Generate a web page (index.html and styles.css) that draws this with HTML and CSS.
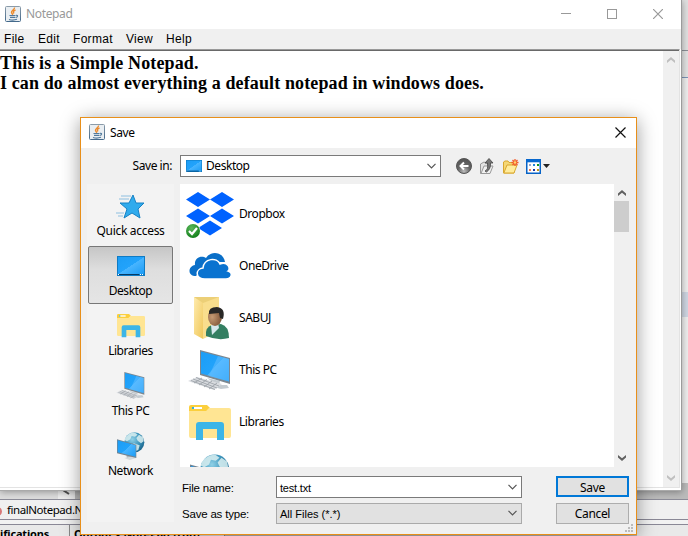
FILE: index.html
```html
<!DOCTYPE html>
<html lang="en">
<head>
<meta charset="utf-8">
<title>Notepad</title>
<link rel="stylesheet" href="styles.css">
</head>
<body>
<svg width="0" height="0" class="defs">
  <defs>
    <linearGradient id="blue" x1="0" y1="0" x2="1" y2="1"><stop offset="0" stop-color="#1c9df5"/><stop offset=".5" stop-color="#22a3fb"/><stop offset=".51" stop-color="#48b5ff"/><stop offset="1" stop-color="#1c9cf5"/></linearGradient>
    <linearGradient id="fold" x1="0" y1="0" x2="1" y2="1"><stop offset="0" stop-color="#ffebad"/><stop offset="1" stop-color="#efc75a"/></linearGradient>
    <linearGradient id="frame" x1="0" y1="0" x2="0" y2="1"><stop offset="0" stop-color="#8a9ba9"/><stop offset="1" stop-color="#44698b"/></linearGradient>
    <radialGradient id="globeFill" cx=".4" cy=".35" r=".65"><stop offset="0" stop-color="#8fd0e6"/><stop offset=".6" stop-color="#3e96bd"/><stop offset="1" stop-color="#1d688f"/></radialGradient>
    <radialGradient id="ball" cx=".5" cy=".85" r=".8"><stop offset="0" stop-color="#bcbcbc"/><stop offset=".5" stop-color="#666"/><stop offset="1" stop-color="#555"/></radialGradient>
    <radialGradient id="green" cx=".4" cy=".3" r=".7"><stop offset="0" stop-color="#5bb85c"/><stop offset="1" stop-color="#14801b"/></radialGradient>
    <radialGradient id="face" cx=".3" cy=".5" r=".8"><stop offset="0" stop-color="#c79b74"/><stop offset="1" stop-color="#73492f"/></radialGradient>
    <symbol id="java" viewBox="0 0 16 16">
      <rect x=".5" y=".5" width="15" height="15" rx="1" fill="#e9eef2" stroke="url(#frame)"/>
      <path d="M9.500 1.500C10 3.500 6 4.500 6.500 6.500C6.700 7.500 8 8 7.500 9M10.500 4C8 5 8 6 9 7.500" fill="none" stroke="#ec8a2c" stroke-width="1.400"/>
      <path d="M4.500 9.500H10.500M5 11.300H10M4 13.500Q8 14.700 12 13.300M11 9.300Q13.500 9 12 11L10.500 11.500" fill="none" stroke="#50799c" stroke-width="1.200"/>
    </symbol>
    <symbol id="desk" viewBox="0 0 28 20"><rect width="28" height="20" fill="#0f7bc4"/><rect x="1" y="1" width="26" height="17" fill="url(#blue)"/><path d="M1 18.500H22" stroke="#063b66"/><path d="M1 18.500h1M23 18.500h1M25 18.500h1" stroke="#fff"/></symbol>
    <symbol id="lib" viewBox="0 0 42 36"><path d="M0 2Q0 0 2 0H18L21 3L18 6H0Z" fill="#fbcf3d"/><path d="M0 6H17L20 3H40Q42 3 42 5V31Q42 33 40 33H2Q0 33 0 31Z" fill="#ffe593"/><rect x="3" y="2" width="10" height="2" fill="#fff"/><rect x="3" y="2" width="2" height="2" fill="#35b0dc"/><path d="M7 35V20Q7 17 10 17H32Q35 17 35 20V35H28V24H14V35Z" fill="#3cb5e7"/></symbol>
    <symbol id="pc" viewBox="0 0 44 42">
      <path d="M19 28L32 31L31 35L39 35L41 38L33 39L19 35L26 33Z" fill="#c4cbd0"/>
      <path d="M12 0L42 8V34L12 25Z" fill="#7c8790"/><path d="M13 1.500L41 9V31.500L13 23.500Z" fill="url(#blue)"/><path d="M30 6L41 9V31.500L21 26Z" fill="#64bdff" opacity=".55"/>
      <path d="M9 27L34 34L26 40L0 31Z" fill="#d9dce0"/><path d="M5 29L29 38M8 27.500L31 36M3 30.500L27 39.500M14 28L6 33M19 29.500L11 35M24 31L16 37M29 33L21 39" stroke="#979da3" stroke-width=".8"/>
    </symbol>
    <symbol id="net" viewBox="0 0 42 42">
      <circle cx="26" cy="15.500" r="15" fill="url(#globeFill)"/><path d="M13 8Q19 0 27 1L31 4L27 7L22 6L20 11L15 14L11 12ZM33 4L39 8L40 14L36 17L31 13L29 9ZM25 17L34 20L32 27L27 29L23 22Z" fill="#d9eef0" opacity=".85"/>
      <path d="M14 34H25L24 39L15 40Z" fill="#a9b3ba"/><path d="M11 39L25 36L29 39L19 42Z" fill="#d3d9dc"/><path d="M0 11L29 19V39L0 32Z" fill="#74838f"/><path d="M1 12.500L28 20V37L1 30.500Z" fill="url(#blue)"/>
    </symbol>
    <symbol id="chev" viewBox="0 0 9 6"><path d="M.5 .8L4.500 4.800L8.500 .8" fill="none" stroke="currentColor" stroke-width="1.200"/></symbol>
    <symbol id="arrow" viewBox="0 0 8 6"><path d="M0 6V3.500L4 0L8 3.500V6L4 2.800Z" fill="currentColor"/></symbol>
  </defs>
</svg>

<div class="ide">
  <div class="ide-side"><i class="a"></i><i class="b"></i><i class="c"></i><i class="d"></i></div>
  <div class="ide-scroll"><svg width="8" height="5" viewBox="0 0 8 5"><path d="M0 0L6 4" stroke="#555" stroke-width="2"/></svg></div>
  <div class="ide-tabs"><span class="dot"></span><span class="tab-name">finalNotepad.Notepad</span></div>
  <div class="ide-gap"></div>
  <div class="ide-panels"><div class="panel-left"><span>ifications</span></div><div class="panel-right"><span>Output - NotePad (run)</span></div><div class="panel-mid"></div></div>
</div>

<section class="window">
  <header class="titlebar">
    <svg width="16" height="16"><use href="#java"/></svg><span class="title">Notepad</span>
    <div class="controls">
      <svg width="10" height="11"><path d="M0 5.500H10" stroke="#999"/></svg>
      <svg width="10" height="10"><rect x=".5" y=".5" width="9" height="9" fill="none" stroke="#999"/></svg>
      <svg width="10" height="10"><path d="M0 0L10 10M10 0L0 10" stroke="#999" stroke-width="1.200"/></svg>
    </div>
  </header>
  <nav class="menu"><span class="m1">File</span><span class="m2">Edit</span><span class="m3">Format</span><span class="m4">View</span><span class="m5">Help</span></nav>
  <div class="editor">
    <div class="text"><div>This is a Simple Notepad.</div><div>I can do almost everything a default notepad in windows does.</div></div>
    <div class="scroll dim"><svg width="8" height="6"><use href="#arrow"/></svg><svg class="down" width="8" height="6"><use href="#arrow"/></svg></div>
  </div>
</section>

<section class="dialog">
  <header class="dialog-title"><svg width="16" height="16"><use href="#java"/></svg><span>Save</span>
    <svg class="close" width="11" height="11"><path d="M.5 .5L10.500 10.500M10.500 .5L.5 10.500" stroke="#111" stroke-width="1.200"/></svg>
  </header>
  <div class="location">
    <label>Save in:</label>
    <div class="combo place"><svg width="16" height="12" viewBox="0 0 28 20" preserveAspectRatio="none"><use href="#desk" width="28" height="20"/></svg><span>Desktop</span><svg class="chev" width="9" height="6"><use href="#chev"/></svg></div>
    <div class="tools">
      <svg width="16" height="16"><circle cx="8" cy="8" r="7.500" fill="url(#ball)" stroke="#555"/><path d="M12.500 8H5M8 4.500L4.500 8L8 11.500" fill="none" stroke="#fff" stroke-width="2"/></svg>
      <svg width="14" height="17" viewBox="0 0 14 17"><path d="M.5 6L4 4L6 5H8V15.500H.5Z" fill="#e4e4e4" stroke="#999"/><path d="M1 15.500L4 8H13L10 15.500Z" fill="#f1f1f1" stroke="#999"/><path d="M5 13Q8.500 12 7.500 5H5L9 .5L13 5H10.500Q11 11 6.500 14Z" fill="#777" stroke="#444" stroke-width=".8"/></svg>
      <svg class="newfolder" width="16" height="16" viewBox="0 0 16 16"><path d="M.5 4L2 3H5L6 4.500H11V15H.5Z" fill="#f5d775" stroke="#d9a72f"/><path d="M.8 15L4 7H14L11 15Z" fill="#ffec9c" stroke="#d9a72f"/><path d="M12 1V8M8.500 4.500H15.500M9.500 2L14.500 7M14.500 2L9.500 7" stroke="#f25b2a" stroke-width="1.300"/><circle cx="12" cy="4.500" r="1.300" fill="#ffd36b"/></svg>
      <svg width="24" height="15" viewBox="0 0 24 15"><rect x=".75" y=".75" width="13.500" height="13.500" fill="#fff" stroke="#0863c6" stroke-width="1.500"/><path d="M0 1.800H15" stroke="#0869d0" stroke-width="3"/><path d="M3 5h2v2h-2z" fill="#98a4ca"/><path d="M7 5h2v2h-2z" fill="#1e82dc"/><path d="M11 5h2v2h-2z" fill="#149319"/><path d="M3 10h2v2h-2z" fill="#f57a50"/><path d="M7 10h2v2h-2z" fill="#1633a5"/><path d="M11 10h2v2h-2z" fill="#c59516"/><path d="M17 5H24L20.500 9Z" fill="#222"/></svg>
    </div>
  </div>
  <div class="browser">
    <aside class="places">
      <div class="spot"><div class="ico"><svg width="30" height="25" viewBox="0 0 30 25"><path d="M17 1L20 9H28L22 15L24 24L16 19L8 24L11 15L4 9H13Z" fill="#30abed" stroke="#1681c4"/><path d="M5 2H15M3 5H13M0 19H8M2 22H7" stroke="#8dbfe0"/></svg></div><span class="q">Quick access</span></div>
      <div class="spot on"><div class="ico"><svg width="28" height="20"><use href="#desk"/></svg></div><span>Desktop</span></div>
      <div class="spot"><div class="ico"><svg width="28" height="24"><use href="#lib" width="28" height="24"/></svg></div><span>Libraries</span></div>
      <div class="spot"><div class="ico"><svg width="30" height="28"><use href="#pc"/></svg></div><span>This PC</span></div>
      <div class="spot"><div class="ico"><svg width="28" height="28"><use href="#net"/></svg></div><span>Network</span></div>
    </aside>
    <div class="files">
      <div class="file"><svg width="48" height="48" viewBox="0 0 48 48"><g fill="#0062ff"><path d="M0 9.500L12 2L24 9.500L12 17ZM24 9.500L36 2L48 9.500L36 17ZM0 26L12 18.500L24 26L12 33.500ZM24 26L36 18.500L48 26L36 33.500ZM12 38L24 30.500L36 38L24 45.500Z"/></g><circle cx="7" cy="41" r="7.500" fill="#fff"/><circle cx="7" cy="41" r="7" fill="url(#green)"/><path d="M3 41L6 44L11 38" fill="none" stroke="#fff" stroke-width="2.200"/></svg><span>Dropbox</span></div>
      <div class="file"><svg width="48" height="48" viewBox="0 0 48 48"><path d="M10 34C1 34 2 24 9 23C8 15 16 13 20 16C26 7 38 11 39 20H32L20 23Z" fill="#0a6fc8"/><path d="M19 37C9 37 9 27 17 26C18 16 31 15 34 22C42 19 45 27 42 29C48 31 45 37 40 37Z" fill="#0a73d0" stroke="#fff" stroke-width="1.500"/></svg><span>OneDrive</span></div>
      <div class="file"><svg width="48" height="48" viewBox="0 0 48 48"><path d="M8 3H33V42H16Z" fill="#eccf77"/><path d="M8 3L17 9V45L8 40Z" fill="url(#fold)"/><path d="M17 9L33 3V37L17 45Z" fill="#f9de8d"/><path d="M20 42Q19 33 26 31L35 30Q43 32 43 44Q32 47 20 42Z" fill="#347f62"/><path d="M25 31L32 29L33 34L26 41Z" fill="#d6e8ed"/><ellipse cx="29" cy="23" rx="7" ry="9" fill="url(#face)"/><path d="M23 20Q22 13 31 13Q40 14 37 25L34 24L33 19Z" fill="#292827"/></svg><span>SABUJ</span></div>
      <div class="file"><svg width="48" height="48" viewBox="0 0 48 48"><use href="#pc" x="2" y="4" width="44" height="42"/></svg><span>This PC</span></div>
      <div class="file"><svg width="48" height="48" viewBox="0 0 48 48"><use href="#lib" x="3" y="7" width="42" height="36"/></svg><span>Libraries</span></div>
      <div class="file"><svg width="48" height="48" viewBox="0 0 48 48"><use href="#net" x="4" y="4" width="40" height="40"/></svg></div>
    </div>
    <div class="scroll"><svg width="8" height="6"><use href="#arrow"/></svg><div class="thumb"></div><svg class="down" width="8" height="6"><use href="#arrow"/></svg></div>
  </div>
  <footer class="form">
    <label class="fl">File name:</label><div class="combo"><span class="v1">test.txt</span><svg class="chev" width="9" height="6"><use href="#chev"/></svg></div><div class="btn primary">Save</div>
    <label class="fl">Save as type:</label><div class="combo type"><span class="v2">All Files (*.*)</span><svg class="chev" width="9" height="6"><use href="#chev"/></svg></div><div class="btn">Cancel</div>
  </footer>
  <svg class="grip" width="8" height="8"><path d="M6 0h2v2h-2zM3 3h2v2h-2zM6 3h2v2h-2zM0 6h2v2h-2zM3 6h2v2h-2zM6 6h2v2h-2z" fill="#bbb"/></svg>
</section>
</body>
</html>
```
FILE: styles.css
```css
* { box-sizing: border-box; }
body { margin: 0; width: 688px; height: 536px; overflow: hidden; position: relative; font: 12px/16px "Noto Sans", sans-serif; color: #000; }
svg { display: block; flex: none; }
.defs { position: absolute; }
span, label { white-space: nowrap; }

.ide { height: 536px; background: #eee; display: flex; flex-direction: column; }
.ide-side { height: 483px; width: 8px; margin-left: auto; display: flex; flex-direction: column; background: #ededed; }
.ide-side .a { height: 50px; background: #e0e0e0; }
.ide-side .b { height: 28px; background: #e2e2e2; border-top: 1px solid #8b8f96; border-bottom: 1px solid #7b93b5; }
.ide-side .c { height: 214px; }
.ide-side .d { height: 25px; background: #cfd6e2; }
.ide-scroll { height: 16px; background: linear-gradient(90deg, #ddd 58px, #eee 58px, #eee 75px, #bbb 75px); padding: 7px 0 0 63px; }
.ide-tabs { height: 21px; border-top: 1px solid #8c8c98; border-bottom: 1px solid #8a8896; display: flex; align-items: center; background: #f0f0f0; overflow: hidden; }
.dot { width: 9px; height: 9px; border-radius: 50%; background: #d87878; margin: 3px 5px 0 -7px; }
.tab-name { font-size: 11.5px; letter-spacing: -.45px; }
.ide-gap { height: 4px; background: #f2f2f2; }
.ide-panels { height: 12px; flex: none; display: flex; border-top: 1px solid #8a8896; background: #e9e9e9; font-weight: 700; font-size: 11px; letter-spacing: -.15px; overflow: hidden; }
.panel-left { width: 70px; padding-top: 1px; border-right: 1px solid #888; }
.panel-right { width: 155px; padding: 1px 0 0 4px; border-right: 1px solid #888; word-spacing: 1px; }
.panel-mid { width: 412px; background: #bbb; }

.window { position: absolute; left: 0; top: 0; width: 682px; height: 491px; background: #fff; border-right: 1px solid #9b9b9b; border-bottom: 1px solid #aaa; box-shadow: 0 1px 7px rgba(0,0,0,.35); }
.titlebar { height: 29px; display: flex; align-items: center; padding: 0 0 2px 5px; color: #999; }
.titlebar .title { margin-left: 5px; letter-spacing: -.35px; }
.controls { display: flex; align-items: center; gap: 36px; margin: 0 18px 0 auto; }
.menu { height: 20px; background: #f0f0f0; display: flex; align-items: center; padding-left: 4px; font: 12px/16px "Liberation Sans", sans-serif; letter-spacing: .3px; }
.menu span { flex: none; }
.m1 { width: 34px; } .m2 { width: 35px; } .m3 { width: 53px; } .m4 { width: 40px; }
.editor { height: 439px; margin-right: 1px; border-top: 1px solid #999; border-right: 1px solid #e3e3e3; border-bottom: 1px solid #e3e3e3; box-shadow: inset 0 1px #696969; display: flex; padding-top: 1px; }
.text { flex: 1; padding-top: 2px; font: bold 18px/20px "Liberation Serif", serif; letter-spacing: .12px; white-space: nowrap; }
.scroll { width: 15px; background: #f0f0f0; color: #606060; display: flex; flex-direction: column; align-items: center; padding: 6px 0; }
.scroll .down { margin-top: auto; transform: scaleY(-1); }
.scroll.dim { width: 16px; color: #bfbfbf; }
.thumb { width: 15px; height: 31px; background: #cdcdcd; margin-top: 5px; }

.dialog { position: absolute; left: 80px; top: 117px; width: 557px; height: 418px; background: #f0f0f0; border: 1px solid #e88f1a; box-shadow: 0 3px 18px rgba(0,0,0,.4); letter-spacing: -.45px; }
.dialog-title { height: 30px; background: #fff; display: flex; align-items: center; padding: 0 10px 2px 8px; }
.dialog-title span { margin-left: 5px; padding-top: 1px; letter-spacing: -.4px; }
.close { margin-left: auto; }
.location { height: 36px; display: flex; align-items: center; padding-left: 7px; }
.location label { width: 84px; text-align: right; margin-right: 8px; }
.combo { height: 22px; border: 1px solid #7a7a7a; background: #fff; display: flex; align-items: center; padding: 0 4px 0 3px; }
.place { width: 261px; padding-left: 5px; }
.place span { margin-left: 4px; }
.chev { margin-left: auto; color: #555; }
.tools { display: flex; align-items: center; margin-left: 15px; gap: 8px; }
.newfolder { margin-left: 1px; margin-right: -1px; }
.browser { display: flex; height: 283px; }
.places { width: 87px; height: 338px; margin: 0 6px; flex: none; background: #f3f3f3; padding: 1px 1px 0; }
.spot { height: 60px; padding-bottom: 4px; display: flex; flex-direction: column; align-items: center; }
.spot .q { letter-spacing: -.3px; }
.spot.on { height: 58px; margin: 1px 0; border: 1px solid #777; border-radius: 2px; background: linear-gradient(#c6c6c6, #dedede 40%, #e5e5e5); }
.spot.on .ico { height: 36px; padding-top: 2px; }
.ico { height: 38px; padding-top: 4px; display: flex; align-items: center; flex: none; }
.files { width: 434px; background: #fff; padding: 4px 0 0 6px; overflow: hidden; }
.file { height: 52px; display: flex; align-items: center; gap: 5px; }
.form { margin: 8px 0 0 101px; display: grid; grid-template-columns: 94px 246px 107px; grid-template-rows: 23px 22px; row-gap: 4px; align-items: center; }
.fl, .v1, .v2 { font: 11px/16px "Liberation Sans", sans-serif; letter-spacing: 0; padding-top: 2px; }
.fl { font-size: 11.5px; letter-spacing: -.2px; }
.v1 { letter-spacing: -.2px; }
.form .combo.type { height: 21px; background: #e1e1e1; border-color: #aaa; }
.btn { width: 73px; justify-self: end; height: 21px; background: #e1e1e1; border: 1px solid #adadad; text-align: center; line-height: 19px; letter-spacing: -.35px; }
.btn.primary { border: 2px solid #0078d7; line-height: 19px; }
.grip { position: absolute; right: 3px; bottom: 2px; }
```
